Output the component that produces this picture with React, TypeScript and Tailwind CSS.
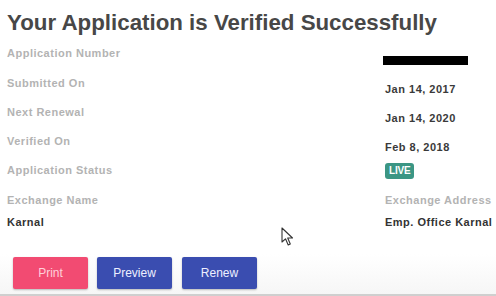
const rows = [
  { label: "Application Number", value: "bar", h: "h-[30px]" },
  { label: "Submitted On", value: "Jan 14, 2017", h: "h-[29px]" },
  { label: "Next Renewal", value: "Jan 14, 2020", h: "h-[29px]" },
  { label: "Verified On", value: "Feb 8, 2018", h: "h-[29px]" },
  { label: "Application Status", value: "live", h: "h-[30px]" },
]

function Cursor() {
  return (
    <svg className="absolute left-[281px] top-[227px]" width="14" height="20" viewBox="0 0 14 20">
      <path d="M1 1 L1 15 L4.5 11.8 L7.2 18 L9.3 17 L6.7 11 L11.5 11 Z" fill="#fff" stroke="#333" strokeWidth="1.1" strokeLinejoin="round" />
    </svg>
  )
}

export default function App() {
  return (
    <div className="relative w-[496px] h-[296px] overflow-hidden bg-white" style={{ fontFamily: '"Liberation Sans", Arial, sans-serif' }}>
      <h1 className="pl-[7px] pt-[9px] text-[22.3px] leading-[28px] font-bold text-[#474747]">
        Your Application is Verified Successfully
      </h1>
      <div className="mt-[9px]">
        {rows.map((r) => (
          <div key={r.label} className={`flex ${r.h}`}>
            <div className="w-[385px] pl-[7px] text-[11px] leading-[14px] font-bold text-[#b3b3b3] tracking-[0.5px]">
              {r.label}
            </div>
            {r.value === "bar" ? (
              <div className="ml-[-2px] mt-[10px] w-[85px] h-[9px] bg-black" />
            ) : r.value === "live" ? (
              <div className="px-[4px] h-[16px] leading-[16px] rounded-[3px] bg-[#3b9684] text-white text-[10px] font-bold tracking-[-0.2px]">
                LIVE
              </div>
            ) : (
              <div className="mt-[6px] text-[11px] leading-[14px] font-bold text-[#3a3a3a] tracking-[0.5px]">
                {r.value}
              </div>
            )}
          </div>
        ))}
        <div className="flex h-[22px]">
          <div className="w-[385px] pl-[7px] text-[11px] leading-[14px] font-bold text-[#b3b3b3] tracking-[0.5px]">Exchange Name</div>
          <div className="text-[11px] leading-[14px] font-bold text-[#b3b3b3] tracking-[0.5px] whitespace-nowrap">Exchange Address</div>
        </div>
        <div className="flex h-[14px]">
          <div className="w-[385px] pl-[7px] text-[11px] leading-[14px] font-bold text-[#333] tracking-[0.5px]">Karnal</div>
          <div className="text-[11px] leading-[14px] font-bold text-[#333] tracking-[0.5px] whitespace-nowrap">Emp. Office Karnal</div>
        </div>
      </div>
      <div className="absolute bottom-0 left-0 right-0 h-[42px] bg-gradient-to-b from-white to-[#f6f6f6] border-b-2 border-[#cfcfcf]" />
      <div className="relative flex gap-[9px] pl-[13px] mt-[28px]">
        <button className="w-[75px] h-[32px] rounded-[2px] bg-[#f24b72] text-[#ffd0da] text-[12px] shadow-[0_1px_2px_rgba(0,0,0,0.25)]">Print</button>
        <button className="w-[75px] h-[32px] rounded-[2px] bg-[#3a4db0] text-[#eef0ff] text-[12px] shadow-[0_1px_2px_rgba(0,0,0,0.25)]">Preview</button>
        <button className="ml-[1px] w-[75px] h-[32px] rounded-[2px] bg-[#3a4db0] text-[#eef0ff] text-[12px] shadow-[0_1px_2px_rgba(0,0,0,0.25)]">Renew</button>
      </div>
      <Cursor />
    </div>
  )
}
